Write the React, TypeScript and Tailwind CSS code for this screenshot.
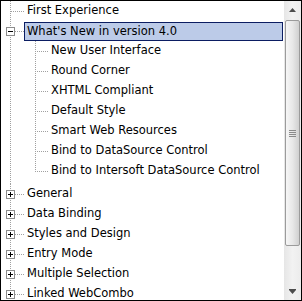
import React from "react";

type Row = {
  label: string;
  level: 0 | 1;
  kind: "leaf" | "plus" | "minus";
  last?: boolean;
  selected?: boolean;
};

const ROWS: Row[] = [
  { label: "First Experience", level: 0, kind: "leaf" },
  { label: "What's New in version 4.0", level: 0, kind: "minus", selected: true },
  { label: "New User Interface", level: 1, kind: "leaf" },
  { label: "Round Corner", level: 1, kind: "leaf" },
  { label: "XHTML Compliant", level: 1, kind: "leaf" },
  { label: "Default Style", level: 1, kind: "leaf" },
  { label: "Smart Web Resources", level: 1, kind: "leaf" },
  { label: "Bind to DataSource Control", level: 1, kind: "leaf" },
  { label: "Bind to Intersoft DataSource Control", level: 1, kind: "leaf", last: true },
  { label: "General", level: 0, kind: "plus" },
  { label: "Data Binding", level: 0, kind: "plus" },
  { label: "Styles and Design", level: 0, kind: "plus" },
  { label: "Entry Mode", level: 0, kind: "plus" },
  { label: "Multiple Selection", level: 0, kind: "plus" },
  { label: "Linked WebCombo", level: 0, kind: "plus" },
];

const DOT = "#a0a0a0";

function Connector({ row }: { row: Row }) {
  const w = row.level === 0 ? 23 : 48;
  const h = row.last ? 23 : 20;
  return (
    <svg width={w} height={h} className="shrink-0" shapeRendering="crispEdges">
      <line x1={9.5} y1={0} x2={9.5} y2={h} stroke={DOT} strokeDasharray="1 1" />
      {row.level === 0 ? (
        <line x1={row.kind === "leaf" ? 10 : 14} y1={10.5} x2={23} y2={10.5} stroke={DOT} strokeDasharray="1 1" />
      ) : (
        <>
          <line x1={34.5} y1={0} x2={34.5} y2={row.last ? 11 : 20} stroke={DOT} strokeDasharray="1 1" />
          <line x1={36} y1={10.5} x2={47} y2={10.5} stroke={DOT} strokeDasharray="1 1" />
        </>
      )}
      {row.kind !== "leaf" && (
        <g>
          <rect x={5.5} y={6.5} width={8} height={8} fill="#ffffff" stroke="#8c8c8c" />
          <line x1={7} y1={10.5} x2={12} y2={10.5} stroke="#000000" />
          {row.kind === "plus" && <line x1={9.5} y1={8} x2={9.5} y2={13} stroke="#000000" />}
        </g>
      )}
    </svg>
  );
}

function ScrollBar() {
  return (
    <div className="w-[17px] shrink-0 flex flex-col bg-gradient-to-r from-[#e6e6e6] via-[#f2f2f2] to-[#ececec]">
      <div className="h-[18px] flex items-center justify-center">
        <svg width={7} height={4}>
          <polygon points="3.5,0 7,4 0,4" fill="#4d4d4d" />
        </svg>
      </div>
      <div className="h-[226px] mx-[1px] mt-[1px] rounded-[2px] border border-[#9b9b9b] bg-gradient-to-r from-[#f6f6f6] via-[#e8e8e8] to-[#d0d0d0] flex items-center justify-center">
        <div className="flex flex-col gap-[1px]">
          <div className="w-[7px] h-[1px] bg-[#8a8a8a]" />
          <div className="w-[7px] h-[1px] bg-[#8a8a8a]" />
          <div className="w-[7px] h-[1px] bg-[#8a8a8a]" />
          <div className="w-[7px] h-[1px] bg-[#8a8a8a]" />
        </div>
      </div>
      <div className="flex-1" />
      <div className="h-[17px] flex items-center justify-center">
        <svg width={7} height={5}>
          <rect x={0} y={0} width={7} height={1} fill="#4d4d4d" />
          <polygon points="0,1 7,1 3.5,5" fill="#4d4d4d" />
        </svg>
      </div>
    </div>
  );
}

export default function App() {
  return (
    <div className="w-[302px] h-[301px] border border-black bg-white flex overflow-hidden text-[11.5px] text-black [font-family:'DejaVu_Sans',Verdana,sans-serif]">
      <div className="flex-1 overflow-hidden">
        {ROWS.map((row) => (
          <div
            key={row.label}
            className={`${row.last ? "h-[23px]" : "h-[20px]"} flex items-start whitespace-nowrap`}
          >
            <Connector row={row} />
            {row.selected ? (
              <span className="flex-1 h-[19px] mt-[1px] flex items-center pl-[2px] mr-[1px] border border-[#0b1d62] bg-[#bccbe8]">
                {row.label}
              </span>
            ) : (
              <span className={`h-[20px] flex items-center ${row.level === 0 ? "pl-[3px]" : "pl-[2px]"}`}>
                {row.label}
              </span>
            )}
          </div>
        ))}
      </div>
      <ScrollBar />
    </div>
  );
}
